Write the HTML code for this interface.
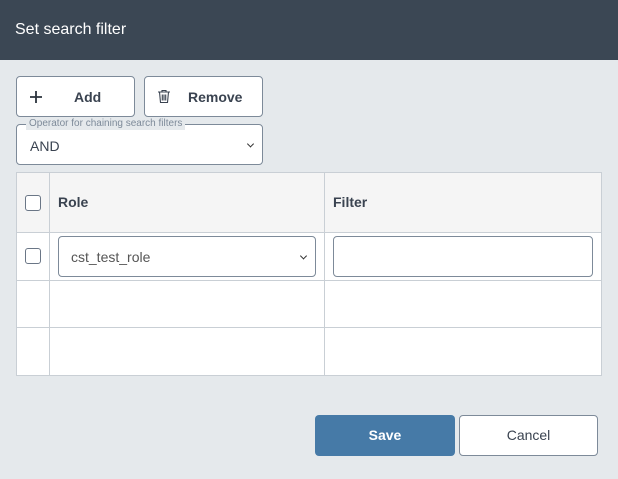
<!DOCTYPE html><html><head><style>
*{box-sizing:border-box}body{margin:0;width:618px;height:479px;background:#e5e9ec;font-family:"Liberation Sans",sans-serif;position:relative;overflow:hidden;color:#3a4350}
.a{position:absolute}
.hd{left:0;top:0;width:618px;height:60px;background:#3b4754;color:#fff;font-size:16px;padding:21px 0 0 15px}
.btn{background:#fff;border:1px solid #7d8a99;border-radius:4px;font-size:14px;font-weight:bold;color:#3a4350}
.sel{background:#fff;border:1px solid #7d8a99;border-radius:4px}
.chev{position:absolute;right:9px;top:50%;width:5px;height:5px;border-right:1.8px solid #333;border-bottom:1.8px solid #333;transform:translateY(-70%) rotate(45deg)}
.cb{width:16px;height:16px;border:1.3px solid #6a7686;border-radius:3px;background:#fff}
.line{background:#c9cfd5}
</style></head><body>
<div class="a hd">Set search filter</div>
<div class="a btn" style="left:16px;top:76px;width:119px;height:41px">
<svg class="a" style="left:12px;top:13px" width="14" height="14" viewBox="0 0 14 14" stroke="#2b333d" stroke-width="1.8"><path d="M7 1v12M1 7h12"/></svg>
<span class="a" style="left:57px;top:12px">Add</span></div>
<div class="a btn" style="left:144px;top:76px;width:119px;height:41px">
<svg class="a" style="left:12px;top:12px" width="14" height="15" viewBox="0 0 14 15" fill="none" stroke="#3a4350" stroke-width="1.1"><path d="M1 3h12M5 3V1.5h4V3M2.5 3l1 10.5h7l1-10.5M5.3 5.5v6M7 5.5v6M8.7 5.5v6"/></svg>
<span class="a" style="left:43px;top:12px">Remove</span></div>
<div class="a sel" style="left:16px;top:124px;width:247px;height:41px"><span class="a" style="left:13px;top:13px;font-size:14px">AND</span><div class="chev"></div></div>
<div class="a" style="left:26px;top:118px;font-size:10px;color:#7d8a99;background:#e5e9ec;padding:0 3px;line-height:12px">Operator for chaining search filters</div>
<div class="a" style="left:16px;top:172px;width:586px;height:204px;background:#fff;border:1px solid #c9cfd5">
<div class="a" style="left:0;top:0;width:584px;height:59px;background:#f5f5f5"></div>
<div class="a line" style="left:0;top:59px;width:584px;height:1px"></div>
<div class="a line" style="left:0;top:107px;width:584px;height:1px"></div>
<div class="a line" style="left:0;top:154px;width:584px;height:1px"></div>
<div class="a line" style="left:32px;top:0;width:1px;height:202px"></div>
<div class="a line" style="left:307px;top:0;width:1px;height:202px"></div>
<div class="a cb" style="left:8px;top:22px"></div>
<div class="a cb" style="left:8px;top:75px"></div>
<div class="a" style="left:41px;top:21px;font-size:14px;font-weight:bold">Role</div>
<div class="a" style="left:316px;top:21px;font-size:14px;font-weight:bold">Filter</div>
<div class="a sel" style="left:41px;top:63px;width:258px;height:41px"><span class="a" style="left:12px;top:12px;font-size:14px;color:#555">cst_test_role</span><div class="chev"></div></div>
<div class="a sel" style="left:316px;top:63px;width:260px;height:41px"></div>
</div>
<div class="a" style="left:315px;top:415px;width:140px;height:41px;background:#467aa7;border-radius:4px;color:#fff;font-weight:bold;font-size:14px;text-align:center;line-height:41px">Save</div>
<div class="a btn" style="left:459px;top:415px;width:139px;height:41px;font-weight:normal;text-align:center;line-height:39px">Cancel</div>
</body></html>
